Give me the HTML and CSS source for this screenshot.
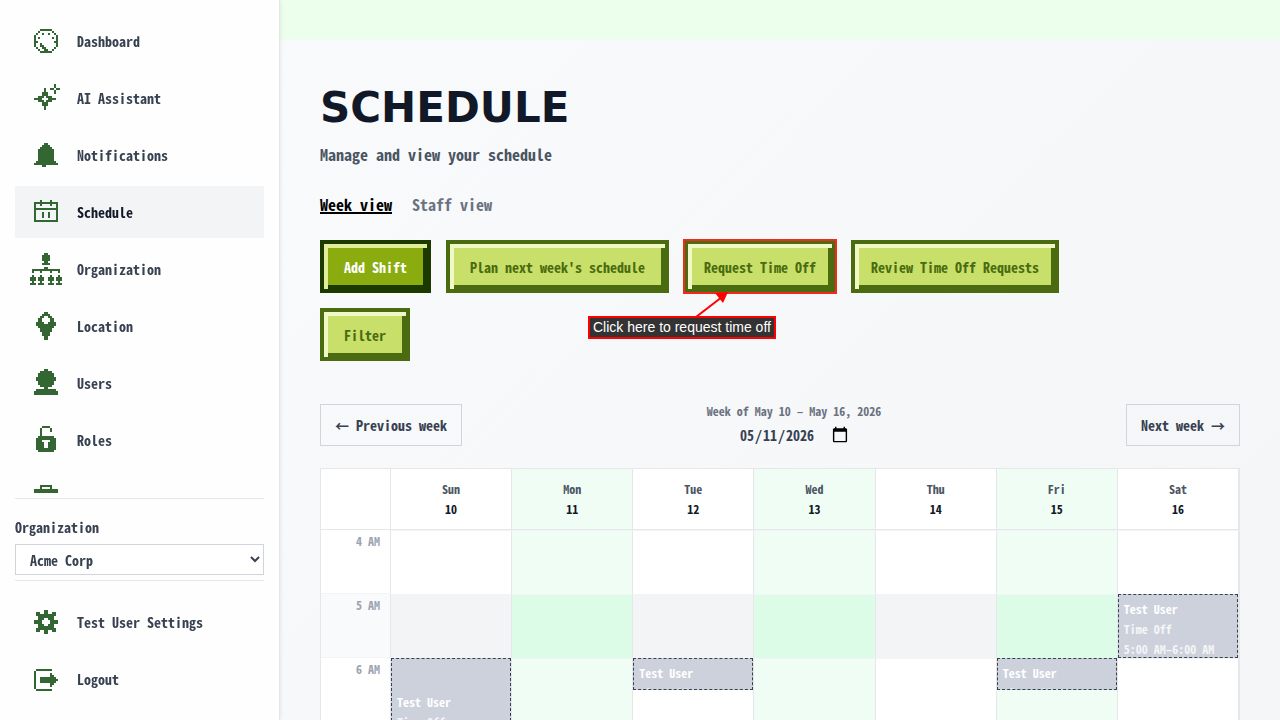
FILE: index.html
```html
<!DOCTYPE html>
<html lang="en">
<head>
    <meta charset="UTF-8">
    <meta name="viewport" content="width=device-width, initial-scale=1.0">
    <title>Schedule</title>
    <link rel="stylesheet" href="styles.css">
</head>
<body>
    <aside class="sidebar">
        <nav class="nav-main">
            <a href="#" class="nav-item">
                <svg class="icon" viewBox="0 0 16 16"><path d="M5 2.5h6M4 3.5h1M11 3.5h1M3 4.5h1M6 4.5h1M9 4.5h1M12 4.5h1M2.5 5v6M13.5 5v6M4 6.5h1M11 6.5h1M3 8.5h1M12 8.5h1M5 9.5h1M5 10.5h2M3 11.5h1M6 11.5h2M12 11.5h1M4 12.5h1M7 12.5h2M11 12.5h1M5 13.5h6"/></svg>
                Dashboard
            </a>
            <a href="#" class="nav-item">
                <svg class="icon" viewBox="0 0 16 16"><path d="M7.5 3v2M6 5.5h3M6 6.5h3M4 7.5h3M8 7.5h3M2 8.5h4M9 8.5h4M4 9.5h3M8 9.5h3M6 10.5h3M6 11.5h3M7.5 12v2M12.5 1v2M10 3.5h2M13 3.5h2M12.5 4v2"/></svg>
                AI Assistant
            </a>
            <a href="#" class="nav-item">
                <svg class="icon" viewBox="0 0 16 16"><path d="M7 2.5h2M6 3.5h4M5 4.5h6M4 5.5h8M4 6.5h8M4 7.5h8M4 8.5h8M4 9.5h8M4 10.5h8M3 11.5h10M2 12.5h12M6 13.5h2"/></svg>
                Notifications
            </a>
            <a href="#" class="nav-item active">
                <svg class="icon" viewBox="0 0 16 16"><path d="M5.5 2v3M10.5 2v3M2 3.5h12M2 6.5h12M2 12.5h12M2.5 4v8M13.5 4v8M6.5 8v3M9.5 8v3"/></svg>
                Schedule
            </a>
            <a href="#" class="nav-item">
                <svg class="icon" viewBox="0 0 16 16"><path d="M7 .5h2M6 1.5h4M6 2.5h4M6 3.5h4M7 4.5h2M6 5.5h4M7 7.5h2M1 8.5h14M1 9.5h1M5 9.5h1M10 9.5h1M14 9.5h1M1.5 11v4M5.5 11v4M10.5 11v4M14.5 11v4M0 12.5h3M4 12.5h3M9 12.5h3M13 12.5h3M0 13.5h3M4 13.5h3M9 13.5h3M13 13.5h3M0 15.5h3M4 15.5h3M9 15.5h3M13 15.5h3"/></svg>
                Organization
            </a>
            <a href="#" class="nav-item">
                <svg class="icon" viewBox="0 0 16 16"><path d="M7 1.5h2M6 2.5h4M5 3.5h2M9 3.5h2M4 4.5h2M10 4.5h2M4 5.5h2M10 5.5h2M3 6.5h4M9 6.5h4M3 7.5h10M4 8.5h8M5 9.5h6M5 10.5h6M6 11.5h4M6 12.5h4M7 13.5h2M7 14.5h2"/></svg>
                Location
            </a>
            <a href="#" class="nav-item">
                <svg class="icon" viewBox="0 0 16 16"><path d="M7 1.5h2M5 2.5h6M4 3.5h8M4 4.5h8M3 5.5h10M3 6.5h10M4 7.5h8M4 8.5h8M5 9.5h6M7 10.5h2M3 11.5h10M2 12.5h12M2 13.5h12"/></svg>
                Users
            </a>
            <a href="#" class="nav-item">
                <svg class="icon" viewBox="0 0 16 16"><path d="M6 1.5h4M5.5 2v4M10.5 2v2M4 6.5h8M3 7.5h10M3 8.5h3M10 8.5h3M3 9.5h4M9 9.5h4M3 10.5h4M9 10.5h4M3 11.5h4M9 11.5h4M3 12.5h10M4 13.5h8"/></svg>
                Roles
            </a>
            <a href="#" class="nav-item" aria-label="Jobs">
                <svg class="icon" viewBox="0 0 16 16"><path d="M5 2.5h6M5 3.5h1M10 3.5h1M2 4.5h12M2 5.5h12M2 6.5h12M2 7.5h12M2 9.5h12M2 10.5h12M2 11.5h12M2 12.5h12"/></svg>
            </a>
        </nav>

        <div class="org-picker">
            <label for="org">Organization</label>
            <select id="org">
                <option>Acme Corp</option>
            </select>
        </div>

        <nav class="nav-user">
            <a href="#" class="nav-item">
                <svg class="icon" viewBox="0 0 16 16"><path d="M7 2.5h2M3 3.5h2M7 3.5h2M11 3.5h2M3 4.5h10M4 5.5h8M4 6.5h3M9 6.5h3M2 7.5h4M10 7.5h4M2 8.5h4M10 8.5h4M4 9.5h3M9 9.5h3M4 10.5h8M3 11.5h10M3 12.5h2M7 12.5h2M11 12.5h2M7 13.5h2"/></svg>
                Test User Settings
            </a>
            <a href="#" class="nav-item">
                <svg class="icon" viewBox="0 0 16 16"><path d="M3 3.5h8M2.5 4v9M3 13.5h8M10 5.5h1M10 6.5h2M5 7.5h8M5 8.5h9M5 9.5h8M10 10.5h2M10 11.5h1"/></svg>
                Logout
            </a>
        </nav>
    </aside>

    <main class="main">
        <div class="top-band"></div>
        <div class="content">
            <h1>SCHEDULE</h1>
            <p class="subtitle">Manage and view your schedule</p>

            <div class="tabs">
                <a href="#" class="tab selected">Week view</a>
                <a href="#" class="tab">Staff view</a>
            </div>

            <div class="actions">
                <button class="btn btn-primary">Add Shift</button>
                <button class="btn">Plan next week's schedule</button>
                <div class="callout-target">
                    <button class="btn btn-tight highlight">Request Time Off</button>
                    <svg class="callout-arrow" viewBox="0 0 40 26" width="40" height="26"><path class="line" d="M4 26L30 6"/><path class="head" d="M23 2L36 1L31 12z"/></svg>
                    <div class="callout">Click here to request time off</div>
                </div>
                <button class="btn btn-tight">Review Time Off Requests</button>
                <button class="btn">Filter</button>
            </div>

            <div class="week-nav">
                <button class="btn-plain">← Previous week</button>
                <div class="week-current">
                    <label for="week-date">Week of May 10 – May 16, 2026</label>
                    <input type="date" id="week-date" value="2026-05-11">
                </div>
                <button class="btn-plain">Next week →</button>
            </div>

            <table class="calendar">
                <thead>
                    <tr>
                        <th class="time"></th>
                        <th>Sun<b>10</b></th>
                        <th class="alt">Mon<b>11</b></th>
                        <th>Tue<b>12</b></th>
                        <th class="alt">Wed<b>13</b></th>
                        <th>Thu<b>14</b></th>
                        <th class="alt">Fri<b>15</b></th>
                        <th>Sat<b>16</b></th>
                    </tr>
                </thead>
                <tbody>
                    <tr>
                        <th class="time">4 AM</th>
                        <td></td>
                        <td class="alt"></td>
                        <td></td>
                        <td class="alt"></td>
                        <td></td>
                        <td class="alt"></td>
                        <td></td>
                    </tr>
                    <tr class="shade">
                        <th class="time">5 AM</th>
                        <td></td>
                        <td class="alt"></td>
                        <td></td>
                        <td class="alt"></td>
                        <td></td>
                        <td class="alt"></td>
                        <td><div class="event hour"><b>Test User</b><span>Time Off</span><span>5:00 AM–6:00 AM</span></div></td>
                    </tr>
                    <tr>
                        <th class="time">6 AM</th>
                        <td><div class="event two-hours"><b>Test User</b><span>Time Off</span><span>6:00 AM–8:00 AM</span></div></td>
                        <td class="alt"></td>
                        <td><div class="event half-hour"><b>Test User</b><span>Time Off</span></div></td>
                        <td class="alt"></td>
                        <td></td>
                        <td class="alt"><div class="event half-hour"><b>Test User</b><span>Time Off</span></div></td>
                        <td></td>
                    </tr>
                    <tr class="shade">
                        <th class="time">7 AM</th>
                        <td></td>
                        <td class="alt"></td>
                        <td></td>
                        <td class="alt"></td>
                        <td></td>
                        <td class="alt"></td>
                        <td></td>
                    </tr>
                </tbody>
            </table>
        </div>
    </main>
</body>
</html>
```
FILE: styles.css
```css
* {
    box-sizing: border-box;
}
body {
    display: flex;
    height: 100vh;
    margin: 0;
    overflow: hidden;
    background-color: #f9fafb;
    color: #374151;
    font-family: "Noto Sans Mono CJK JP", "Liberation Mono", monospace;
    font-size: 14px;
    font-weight: bold;
    line-height: 20px;
}
button,
input,
select {
    font: inherit;
    color: inherit;
}

/* Sidebar */
.sidebar {
    display: flex;
    flex-direction: column;
    flex-shrink: 0;
    width: 280px;
    padding: 15px;
    background-color: #fefefe;
    border-right: 1px solid #e5e7eb;
    box-shadow: 0 0 4px rgba(0, 0, 0, 0.1);
    z-index: 1;
}
.nav-main,
.nav-user {
    display: flex;
    flex-direction: column;
    gap: 5px;
}
.nav-main {
    flex: 1;
    min-height: 0;
    margin-bottom: 5px;
    overflow-y: auto;
    scrollbar-width: none;
}
.nav-user {
    padding-top: 15px;
}
.nav-item {
    display: flex;
    flex-shrink: 0;
    align-items: center;
    gap: 15px;
    padding: 10px 15px;
    color: #374151;
    text-decoration: none;
}
.nav-item.active {
    background-color: #f3f4f6;
    color: #111827;
}
.icon {
    width: 32px;
    height: 32px;
    fill: none;
    stroke: #336633;
    stroke-width: 1;
    shape-rendering: crispEdges;
}
.org-picker {
    display: flex;
    flex-direction: column;
    gap: 7px;
    padding: 18px 0 5px;
    border-top: 1px solid #e5e7eb;
    border-bottom: 1px solid #e5e7eb;
}
.org-picker select {
    width: 100%;
    height: 31px;
    padding: 0 10px;
    background-color: #fff;
    border: 1px solid #d1d5db;
    border-radius: 0;
}

/* Page */
.main {
    flex: 1;
    min-width: 0;
    overflow-y: auto;
    scrollbar-width: none;
}
.top-band {
    height: 40px;
    background-color: #ecffec;
}
.content {
    padding: 40px;
    background-image: linear-gradient(135deg, #f9fafc, #f3f4f6 120%);
}
h1 {
    margin: 0;
    color: #111827;
    font-family: "DejaVu Sans", sans-serif;
    font-size: 42px;
    line-height: 56px;
}
.subtitle {
    margin: 6px 0 26px;
    color: #4b5563;
    font-size: 16px;
    line-height: 24px;
}
.tabs {
    display: flex;
    gap: 20px;
    margin-bottom: 24px;
    font-size: 16px;
    line-height: 24px;
}
.tab {
    color: #6b7280;
    text-decoration: none;
}
.tab.selected {
    color: #000;
    text-decoration: underline;
    text-decoration-thickness: 2px;
}

/* Buttons */
.actions {
    display: flex;
    flex-wrap: wrap;
    gap: 15px;
    max-width: 800px;
}
.btn {
    height: 53px;
    padding: 0 20px;
    background-color: #c8df69;
    border: 4px solid #4a6b0f;
    box-shadow: inset 4px 4px 0 #f0f8c8, inset -4px -4px 0 #4a6b0f;
    color: #4a6b0f;
    cursor: pointer;
}
.btn-primary {
    background-color: #8bac0f;
    border-color: #1c3a00;
    box-shadow: inset 4px 4px 0 #e0ee9a, inset -4px -4px 0 #1c3a00;
    color: #fff;
}
.btn-tight {
    padding: 0 16px;
}
.highlight {
    outline: 2px solid #f02a1c;
    outline-offset: -1px;
}
.callout-target {
    position: relative;
}
.callout {
    position: absolute;
    top: 76px;
    left: -96px;
    padding: 0 3px;
    background-color: #333;
    border: 2px solid #f00;
    color: #fff;
    font-family: "Liberation Sans", Arial, sans-serif;
    font-size: 14px;
    font-weight: normal;
    line-height: 19px;
    white-space: nowrap;
}
.callout-arrow {
    position: absolute;
    top: 51px;
    left: 8px;
}
.callout-arrow .line {
    stroke: #f00;
    stroke-width: 2;
}
.callout-arrow .head {
    fill: #f00;
}

/* Week navigation */
.week-nav {
    display: flex;
    align-items: center;
    justify-content: space-between;
    margin: 40px 0 19px;
}
.btn-plain {
    height: 42px;
    padding: 0 14px;
    background-color: transparent;
    border: 1px solid #d1d5db;
    cursor: pointer;
}
.week-current {
    display: flex;
    flex-direction: column;
    align-items: center;
}
.week-current label {
    color: #6b7280;
    font-size: 12px;
}
.week-current input {
    height: 28px;
    padding: 0;
    background-color: transparent;
    border: 0;
}
.week-current input::-webkit-calendar-picker-indicator {
    width: 18px;
    height: 18px;
    margin-left: 2px;
    padding: 0;
}

/* Calendar */
.calendar {
    width: 100%;
    table-layout: fixed;
    border: 1px solid #e5e7eb;
    border-spacing: 0;
    background-color: #fff;
    font-size: 12px;
}
.calendar th,
.calendar td {
    padding: 0;
    border-right: 1px solid #e5e7eb;
}
.calendar thead th {
    height: 61px;
    border-bottom: 1px solid #e5e7eb;
    color: #4b5563;
}
.calendar thead b {
    display: block;
    color: #111827;
}
.calendar .time {
    width: 70px;
}
.calendar tbody .time {
    padding: 1px 10px 0 0;
    border-bottom: 1px solid #f3f4f6;
    color: #9ca3af;
    text-align: right;
    vertical-align: top;
}
.calendar td {
    position: relative;
    height: 64px;
    border-top: 1px solid #f3f4f6;
}
.calendar .alt {
    background-color: #f0fdf4;
}
.shade .time {
    background-color: #f9fafb;
}
.shade td {
    background-color: #f3f4f6;
}
.calendar .shade .alt {
    background-color: #dcfce7;
}
.event {
    position: absolute;
    top: -1px;
    left: 0;
    right: 0;
    z-index: 1;
    display: flex;
    flex-direction: column;
    justify-content: safe center;
    padding: 4px 5px;
    overflow: hidden;
    background-color: #cdd1dc;
    border: 1px dashed #374151;
    color: #fff;
    white-space: nowrap;
}
.event span {
    flex-shrink: 0;
    opacity: 0.8;
}
.half-hour {
    height: 32px;
}
.hour {
    height: 64px;
}
.two-hours {
    height: 128px;
}
```
